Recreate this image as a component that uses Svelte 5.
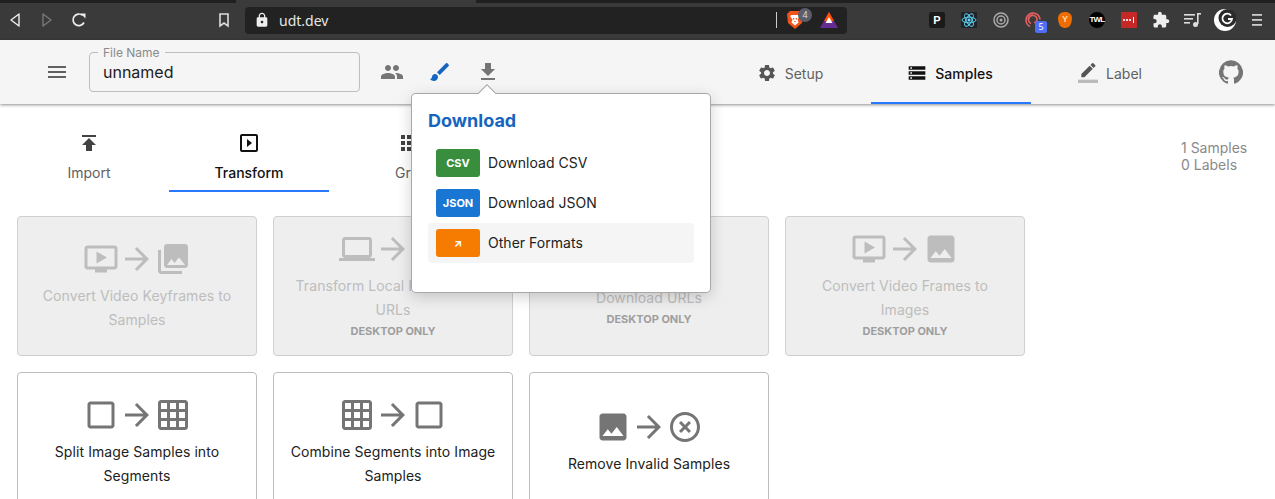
<script>
  const icons = {
    video: "M21 3H3c-1.11 0-2 .89-2 2v12c0 1.1.89 2 2 2h5v2h8v-2h5c1.1 0 1.99-.9 1.99-2L23 5c0-1.11-.9-2-2-2zm0 14H3V5h18v12zm-5-6l-7 4V7z",
    arrow: "M12 4l-1.41 1.41L16.17 11H4v2h12.17l-5.58 5.59L12 20l8-8z",
    collections: "M22 16V4c0-1.1-.9-2-2-2H8c-1.1 0-2 .9-2 2v12c0 1.1.9 2 2 2h12c1.1 0 2-.9 2-2zm-11-4l2.03 2.71L16 11l4 5H8l3-4zM2 6v14c0 1.1.9 2 2 2h14v-2H4V6H2z",
    laptop: "M20 18c1.1 0 2-.9 2-2V6c0-1.1-.9-2-2-2H4c-1.1 0-2 .9-2 2v10c0 1.1.9 2 2 2H0v2h24v-2h-4zM4 6h16v10H4V6z",
    image: "M21 19V5c0-1.1-.9-2-2-2H5c-1.1 0-2 .9-2 2v14c0 1.1.9 2 2 2h14c1.1 0 2-.9 2-2zM8.5 13.5l2.5 3.01L14.5 12l4.5 6H5l3.5-4.5z",
    blank: "M19 5v14H5V5h14m0-2H5c-1.1 0-2 .9-2 2v14c0 1.1.9 2 2 2h14c1.1 0 2-.9 2-2V5c0-1.1-.9-2-2-2z",
    grid: "M20 2H4c-1.1 0-2 .9-2 2v16c0 1.1.9 2 2 2h16c1.1 0 2-.9 2-2V4c0-1.1-.9-2-2-2zM8 20H4v-4h4v4zm0-6H4v-4h4v4zm0-6H4V4h4v4zm6 12h-4v-4h4v4zm0-6h-4v-4h4v4zm0-6h-4V4h4v4zm6 12h-4v-4h4v4zm0-6h-4v-4h4v4zm0-6h-4V4h4v4z",
    off: "M14.59 8L12 10.59 9.41 8 8 9.41 10.59 12 8 14.59 9.41 16 12 13.41 14.59 16 16 14.59 13.41 12 16 9.41 14.59 8zM12 2C6.47 2 2 6.47 2 12s4.47 10 10 10 10-4.47 10-10S17.53 2 12 2zm0 18c-4.41 0-8-3.59-8-8s3.59-8 8-8 8 3.59 8 8-3.59 8-8 8z",
    publish: "M5 4v2h14V4H5zm0 10h4v6h6v-6h4l-7-7-7 7z",
    slideshow: "M10 8v8l5-4-5-4zm9-5H5c-1.1 0-2 .9-2 2v14c0 1.1.9 2 2 2h14c1.1 0 2-.9 2-2V5c0-1.1-.9-2-2-2zm0 16H5V5h14v14z",
    apps: "M4 8h4V4H4v4zm6 12h4v-4h-4v4zm-6 0h4v-4H4v4zm0-6h4v-4H4v4zm6 0h4v-4h-4v4zm6-10v4h4V4h-4zm-6 4h4V4h-4v4zm6 6h4v-4h-4v4zm0 6h4v-4h-4v4z",
    menu: "M3 18h18v-2H3v2zm0-5h18v-2H3v2zm0-7v2h18V6H3z",
    group: "M16 11c1.66 0 2.99-1.34 2.99-3S17.66 5 16 5c-1.66 0-3 1.34-3 3s1.34 3 3 3zm-8 0c1.66 0 2.99-1.34 2.99-3S9.66 5 8 5C6.34 5 5 6.34 5 8s1.34 3 3 3zm0 2c-2.33 0-7 1.17-7 3.5V19h14v-2.5c0-2.33-4.67-3.5-7-3.5zm8 0c-.29 0-.62.02-.97.05 1.16.84 1.97 1.97 1.97 3.45V19h6v-2.5c0-2.33-4.67-3.5-7-3.5z",
    brush: "M7 14c-1.66 0-3 1.34-3 3 0 1.31-1.16 2-2 2 .92 1.22 2.49 2 4 2 2.21 0 4-1.79 4-4 0-1.66-1.34-3-3-3zm13.71-9.37l-1.34-1.34c-.39-.39-1.02-.39-1.41 0L9 12.25 11.75 15l8.96-8.96c.39-.39.39-1.02 0-1.41z",
    download: "M19 9h-4V3H9v6H5l7 7 7-7zM5 18v2h14v-2H5z",
    settings: "M19.14 12.94c.04-.3.06-.61.06-.94 0-.32-.02-.64-.07-.94l2.03-1.58c.18-.14.23-.41.12-.61l-1.92-3.32c-.12-.22-.37-.29-.59-.22l-2.39.96c-.5-.38-1.03-.7-1.62-.94l-.36-2.54c-.04-.24-.24-.41-.48-.41h-3.84c-.24 0-.43.17-.47.41l-.36 2.54c-.59.24-1.13.57-1.62.94l-2.39-.96c-.22-.08-.47 0-.59.22L2.74 8.87c-.12.21-.08.47.12.61l2.03 1.58c-.05.3-.09.63-.09.94s.02.64.07.94l-2.03 1.58c-.18.14-.23.41-.12.61l1.92 3.32c.12.22.37.29.59.22l2.39-.96c.5.38 1.03.7 1.62.94l.36 2.54c.05.24.24.41.48.41h3.84c.24 0 .44-.17.47-.41l.36-2.54c.59-.24 1.13-.56 1.62-.94l2.39.96c.22.08.47 0 .59-.22l1.92-3.32c.12-.22.07-.47-.12-.61l-2.01-1.58zM12 15.6c-1.98 0-3.6-1.62-3.6-3.6s1.62-3.6 3.6-3.6 3.6 1.62 3.6 3.6-1.62 3.6-3.6 3.6z",
    storage: "M2 20h20v-4H2v4zm2-3h2v2H4v-2zM2 4v4h20V4H2zm4 3H4V5h2v2zm-4 7h20v-4H2v4zm2-3h2v2H4v-2z",
    pencil: "M17.75 7L14 3.25l-10 10V17h3.75l10-10zm2.96-2.96c.39-.39.39-1.02 0-1.41L18.37.29c-.39-.39-1.02-.39-1.41 0L15 2.25 18.75 6l1.96-1.96z",
    github: "M12 .3a12 12 0 0 0-3.8 23.4c.6.1.8-.3.8-.6v-2c-3.3.7-4-1.6-4-1.6-.6-1.4-1.4-1.8-1.4-1.8-1-.7.1-.7.1-.7 1.2 0 1.9 1.2 1.9 1.2 1 1.8 2.8 1.3 3.5 1 0-.8.4-1.3.7-1.6-2.7-.3-5.5-1.3-5.5-6 0-1.2.5-2.3 1.3-3.1-.2-.4-.6-1.6 0-3.2 0 0 1-.3 3.4 1.2a11.5 11.5 0 0 1 6 0c2.3-1.5 3.3-1.2 3.3-1.2.6 1.6.2 2.8 0 3.2.9.8 1.3 1.9 1.3 3.2 0 4.6-2.8 5.6-5.5 5.9.5.4.9 1 .9 2.2v3.3c0 .3.1.7.8.6A12 12 0 0 0 12 .3"
  };

  const headerTabs = [
    { label: "Setup", icon: "settings" },
    { label: "Samples", icon: "storage", active: true },
    { label: "Label", icon: "pencil", bar: true }
  ];

  const subTabs = [
    { label: "Import", icon: "publish" },
    { label: "Transform", icon: "slideshow", active: true },
    { label: "Grid", icon: "apps" }
  ];

  const formats = [
    { badge: "CSV", label: "Download CSV", color: "#388e3c" },
    { badge: "JSON", label: "Download JSON", color: "#1976d2" },
    { badge: "↗", label: "Other Formats", color: "#f57c00", hover: true }
  ];

  const cards = [
    { title: "Convert Video Keyframes to Samples", from: "video", to: "collections", disabled: true },
    { title: "Transform Local Files to Web URLs", from: "laptop", to: "image", disabled: true, desktop: true },
    { title: "Download URLs", from: "image", to: "image", disabled: true, desktop: true },
    { title: "Convert Video Frames to Images", from: "video", to: "image", disabled: true, desktop: true },
    { title: "Split Image Samples into Segments", from: "blank", to: "grid" },
    { title: "Combine Segments into Image Samples", from: "grid", to: "blank" },
    { title: "Remove Invalid Samples", from: "image", to: "off" }
  ];
</script>

<div class="browser">
  <div class="tabstrip"><div class="current-tab"></div></div>
  <div class="toolbar">
    <div class="nav">
      <svg class="back" viewBox="0 0 12 16" width="12" height="16"><path d="M10 2L2 8l8 6z" fill="none" stroke="#eee" stroke-width="1.4" stroke-linejoin="round" /></svg>
      <svg class="forward" viewBox="0 0 12 16" width="12" height="16"><path d="M2 2l8 6-8 6z" fill="none" stroke="#777" stroke-width="1.4" stroke-linejoin="round" /></svg>
      <svg class="reload" viewBox="0 0 16 16" width="16" height="16"><path d="M13 10.500A5.800 5.800 0 1 1 11.600 3.400" fill="none" stroke="#eee" stroke-width="1.700" /><path d="M9.500 1.500h5v5z" fill="#eee" /></svg>
      <svg class="bookmark" viewBox="0 0 12 16" width="12" height="16"><path d="M2 2h8v12l-4-3-4 3z" fill="none" stroke="#ddd" stroke-width="1.600" /></svg>
    </div>
    <div class="url">
      <svg viewBox="0 0 24 24" width="16" height="16"><path fill="#eee" d="M18 8h-1V6c0-2.76-2.24-5-5-5S7 3.24 7 6v2H6c-1.1 0-2 .9-2 2v10c0 1.1.9 2 2 2h12c1.1 0 2-.9 2-2V10c0-1.1-.9-2-2-2zm-6 9c-1.1 0-2-.9-2-2s.9-2 2-2 2 .9 2 2-.9 2-2 2zm3.1-9H8.900V6c0-1.71 1.39-3.1 3.1-3.1s3.1 1.39 3.1 3.1v2z" /></svg>
      <span class="host">udt.dev</span>
      <span class="divider"></span>
      <div class="brave">
        <svg viewBox="0 0 16 20" width="16" height="20"><path d="M3 1h10l3 3-1 9-7 6-7-6-1-9z" fill="#f0531c" /><path d="M4 5h8l.8 1.500-2.300 3 1 3L8 15.500 4.500 12.500l1-3-2.300-3z" fill="#fff" /><path d="M6 8h1.300v1.500H6zM8.700 8H10v1.500H8.700zM7 11h2l-1 1.500z" fill="#f0531c" /></svg>
        <span class="shield-count">4</span>
      </div>
      <svg class="bat" viewBox="0 0 18 16" width="18" height="16"><path d="M9 0l9 16H0z" fill="#662d91" /><path d="M9 0l5 9H4z" fill="#ff5000" /><path d="M9 5l3.500 6h-7z" fill="#fff" /></svg>
    </div>
    <div class="extensions">
      <span class="ext"><span class="ext-p">P</span></span>
      <span class="ext">
        <svg viewBox="0 0 16 16" width="16" height="16"><rect width="16" height="16" fill="#20232a" /><g fill="none" stroke="#61dafb" stroke-width=".9"><ellipse cx="8" cy="8" rx="7" ry="2.800" /><ellipse cx="8" cy="8" rx="7" ry="2.800" transform="rotate(60 8 8)" /><ellipse cx="8" cy="8" rx="7" ry="2.800" transform="rotate(120 8 8)" /></g><circle cx="8" cy="8" r="1.500" fill="#61dafb" /></svg>
      </span>
      <span class="ext">
        <svg viewBox="0 0 16 16" width="16" height="16"><g fill="none" stroke="#aaa"><circle cx="8" cy="8" r="7" stroke-width="1.500" /><circle cx="8" cy="8" r="4" stroke-width="1.500" /></g><circle cx="8" cy="8" r="1.500" fill="#aaa" /></svg>
      </span>
      <span class="ext">
        <svg viewBox="0 0 16 16" width="16" height="16"><g fill="none" stroke="#e35f5f" stroke-width="1.600"><path d="M5 14.500A7 7 0 1 1 15 7.500" /><path d="M6 11.500A4.200 4.200 0 1 1 12 7.500 3 3 0 0 1 9 10.500" /><path d="M3 7.500A5 5 0 0 1 8 3" /></g></svg>
        <span class="ext-badge">5</span>
      </span>
      <span class="ext">
        <span class="ext-y">Y</span>
      </span>
      <span class="ext"><span class="ext-twl">TWL</span></span>
      <span class="ext">
        <svg viewBox="0 0 16 16" width="16" height="16"><rect width="16" height="16" rx="1" fill="#c62828" /><g fill="#fff"><circle cx="3" cy="8" r="1.100" /><circle cx="6" cy="8" r="1.100" /><circle cx="9" cy="8" r="1.100" /><rect x="12" y="5" width="1" height="6" /></g></svg>
      </span>
      <span class="ext">
        <svg viewBox="0 0 24 24" width="18" height="18"><path fill="#eee" d="M20.500 11H19V7c0-1.100-.9-2-2-2h-4V3.500C13 2.120 11.880 1 10.500 1S8 2.120 8 3.500V5H4c-1.100 0-1.990.9-1.990 2v3.800H3.500c1.490 0 2.700 1.210 2.700 2.700s-1.210 2.700-2.700 2.700H2V20c0 1.100.9 2 2 2h3.800v-1.500c0-1.490 1.210-2.700 2.700-2.700 1.490 0 2.700 1.210 2.700 2.700V22H17c1.100 0 2-.9 2-2v-4h1.500c1.380 0 2.500-1.120 2.500-2.500S21.880 11 20.500 11z" /></svg>
      </span>
      <span class="ext">
        <svg viewBox="0 0 18 16" width="18" height="16"><g fill="#ddd"><rect y="2" width="11" height="1.600" /><rect y="6" width="9" height="1.600" /><rect y="10" width="6" height="1.600" /><rect x="13" y="1" width="1.600" height="11" /><rect x="13" y="1" width="4" height="1.600" /><circle cx="11.500" cy="12.500" r="2.500" /></g></svg>
      </span>
      <span class="ext">
        <svg viewBox="0 0 22 22" width="22" height="22"><circle cx="11" cy="11" r="11" fill="#fff" /><circle cx="13.500" cy="9" r="9" fill="#2b2b2b" /><path d="M17 6.500A4.800 4.800 0 1 0 18 10h-4" fill="none" stroke="#fff" stroke-width="1.800" /></svg>
      </span>
      <span class="ext">
        <svg viewBox="0 0 10 12" width="10" height="12"><g fill="#ccc"><rect width="10" height="1.800" /><rect y="5" width="10" height="1.800" /><rect y="10" width="10" height="1.800" /></g></svg>
      </span>
    </div>
  </div>
</div>

<header class="header">
  <svg class="hamburger" viewBox="0 0 24 24" width="24" height="24"><path d={icons.menu} /></svg>
  <div class="field">
    <span class="legend">File Name</span>
    <span class="value">unnamed</span>
  </div>
  <div class="actions">
    <svg viewBox="0 0 24 24" width="24" height="24"><path d={icons.group} /></svg>
    <svg viewBox="0 0 24 24" width="24" height="24" fill="#1565c0"><path d={icons.brush} /></svg>
    <svg viewBox="0 0 24 24" width="24" height="24"><path d={icons.download} /></svg>
  </div>
  <nav class="header-tabs">
    {#each headerTabs as tab}
      <div class="header-tab" class:active={tab.active}>
        <svg viewBox="0 0 24 24" width="20" height="20">
          <path d={icons[tab.icon]} />
          {#if tab.bar}<rect y="20" width="24" height="4" fill="#bbb" />{/if}
        </svg>
        <span>{tab.label}</span>
      </div>
    {/each}
  </nav>
  <svg class="github" viewBox="0 0 24 24" width="24" height="24"><path d={icons.github} /></svg>
</header>

<main class="main">
  <div class="top">
    <div class="sub-tabs">
      {#each subTabs as tab}
        <div class="sub-tab" class:active={tab.active}>
          <svg viewBox="0 0 24 24" width="24" height="24"><path d={icons[tab.icon]} /></svg>
          <span>{tab.label}</span>
        </div>
      {/each}
    </div>
    <div class="counts">
      <div>1 Samples</div>
      <div>0 Labels</div>
    </div>
  </div>

  <div class="cards">
    {#each cards as card}
      <div class="card" class:disabled={card.disabled}>
        <div class="card-icons">
          <svg viewBox="0 0 24 24" width="36" height="36"><path d={icons[card.from]} /></svg>
          <svg viewBox="0 0 24 24" width="36" height="36"><path d={icons.arrow} /></svg>
          <svg viewBox="0 0 24 24" width="36" height="36"><path d={icons[card.to]} /></svg>
        </div>
        <div class="card-title">{card.title}</div>
        {#if card.desktop}<div class="card-note">DESKTOP ONLY</div>{/if}
      </div>
    {/each}
  </div>
</main>

<div class="popover">
  <div class="popover-title">Download</div>
  {#each formats as format}
    <div class="format" class:hover={format.hover}>
      <span class="format-badge" style="background: {format.color}">{format.badge}</span>
      <span class="format-label">{format.label}</span>
    </div>
  {/each}
</div>

<style>
  :global(html), :global(body) {
    margin: 0;
    height: 499px;
    overflow: hidden;
    background: #fff;
  }

  .browser {
    background: #3a3a3a;
    height: 40px;
    font-family: "Noto Sans", sans-serif;
  }

  .tabstrip {
    height: 3px;
    background: #202020;
  }

  .current-tab {
    width: 240px;
    height: 3px;
    margin-left: 236px;
    background: #3a3a3a;
  }

  .toolbar {
    display: flex;
    align-items: center;
    height: 37px;
  }

  .nav {
    display: flex;
    align-items: center;
    width: 245px;
    flex: none;
    padding-bottom: 3px;
    box-sizing: border-box;
  }

  .back { margin-left: 9px; }
  .forward { margin-left: 20px; }
  .reload { margin-left: 18px; }
  .bookmark { margin-left: 131px; }

  .url {
    display: flex;
    align-items: center;
    width: 602px;
    height: 27px;
    flex: none;
    margin-bottom: 3px;
    padding-left: 9px;
    box-sizing: border-box;
    background: #222;
    border-radius: 4px;
    color: #e6e6e6;
    font-size: 14px;
  }

  .host { margin-left: 9px; }

  .divider {
    width: 1px;
    height: 16px;
    margin-left: auto;
    background: #ccc;
  }

  .brave {
    position: relative;
    display: flex;
    margin-left: 10px;
  }

  .shield-count {
    position: absolute;
    left: 11px;
    top: -2px;
    width: 14px;
    height: 14px;
    border-radius: 50%;
    background: #5b5d6b;
    color: #ddd;
    font-size: 9px;
    line-height: 14px;
    text-align: center;
  }

  .bat { margin: 0 9px 0 17px; }

  .extensions {
    display: flex;
    margin-left: 74px;
    margin-bottom: 3px;
  }

  .ext {
    position: relative;
    display: flex;
    align-items: center;
    justify-content: center;
    width: 32px;
    height: 24px;
  }

  .ext-p {
    width: 16px;
    height: 16px;
    border-radius: 2px;
    background: #1a1a1a;
    color: #fff;
    font: bold 11px/16px "Liberation Sans", sans-serif;
    text-align: center;
  }

  .ext-badge {
    position: absolute;
    left: 18px;
    top: 13px;
    width: 12px;
    height: 12px;
    border-radius: 2px;
    background: #4f6ef7;
    color: #fff;
    font-size: 9px;
    line-height: 12px;
    text-align: center;
  }

  .ext-y {
    width: 14px;
    height: 16px;
    border-radius: 50% 50% 50% 50% / 45% 45% 70% 70%;
    background: #ef6c00;
    color: #ffd9a8;
    font: bold 9px/15px "Liberation Sans", sans-serif;
    text-align: center;
  }

  .ext-twl {
    width: 16px;
    height: 16px;
    border-radius: 50%;
    background: #000;
    color: #fff;
    font: bold 8px/16px "Liberation Sans", sans-serif;
    letter-spacing: -0.8px;
    text-align: center;
  }

  .header {
    position: relative;
    z-index: 1;
    display: flex;
    align-items: center;
    height: 64px;
    padding-left: 45px;
    background: #f5f5f5;
    box-shadow: 0 1px 3px rgba(0, 0, 0, 0.45);
    font-family: Inter, sans-serif;
  }

  .hamburger {
    flex: none;
    fill: #616161;
    margin-right: 20px;
  }

  .field {
    position: relative;
    width: 271px;
    height: 40px;
    box-sizing: border-box;
    padding: 0 13px;
    display: flex;
    align-items: center;
    border: 1px solid #bdbdbd;
    border-radius: 4px;
  }

  .legend {
    position: absolute;
    left: 8px;
    top: -7px;
    padding: 0 5px;
    background: #f5f5f5;
    color: #8a8a8a;
    font-size: 12px;
    line-height: 14px;
  }

  .value {
    color: #212121;
    font-size: 16px;
  }

  .actions {
    display: flex;
    gap: 24px;
    margin-left: 20px;
    fill: #757575;
  }

  .header-tabs {
    display: flex;
    align-self: stretch;
    margin-left: 211px;
  }

  .header-tab {
    display: flex;
    align-items: center;
    justify-content: center;
    gap: 8px;
    width: 160px;
    box-sizing: border-box;
    padding: 4px 2px 0 0;
    border-bottom: 2px solid transparent;
    color: #616161;
    fill: #555;
    font-size: 14px;
  }

  .header-tab.active {
    border-bottom-color: #2979ff;
    color: #111;
    fill: #111;
    font-weight: 500;
  }

  .github {
    flex: none;
    margin-left: 28px;
    fill: #757575;
  }

  .main {
    font-family: Inter, sans-serif;
  }

  .top {
    display: flex;
    justify-content: space-between;
    padding: 24px 27px 0 9px;
  }

  .sub-tabs {
    display: flex;
  }

  .sub-tab {
    display: flex;
    flex-direction: column;
    align-items: center;
    gap: 9px;
    width: 160px;
    height: 64px;
    box-sizing: border-box;
    padding-top: 3px;
    border-bottom: 2px solid transparent;
    color: #616161;
    fill: #424242;
    font-size: 14px;
    line-height: 17px;
  }

  .sub-tab.active {
    border-bottom-color: #2979ff;
    color: #111;
    fill: #111;
    font-weight: 500;
  }

  .counts {
    padding-top: 11px;
    width: 67px;
    color: #8a8a8a;
    font-size: 14px;
    line-height: 17px;
  }

  .cards {
    display: grid;
    grid-template-columns: repeat(4, 240px);
    grid-auto-rows: 140px;
    gap: 16px;
    padding: 24px 17px 0;
  }

  .card {
    display: flex;
    flex-direction: column;
    align-items: center;
    justify-content: center;
    box-sizing: border-box;
    padding: 0 16px;
    border: 1px solid #bdbdbd;
    border-radius: 4px;
    color: #212121;
    fill: #757575;
    font-size: 14px;
    line-height: 24px;
    letter-spacing: 0.08px;
    text-align: center;
  }

  .card.disabled {
    background: #eee;
    border-color: #d0d0d0;
    color: #bdbdbd;
    fill: #bdbdbd;
  }

  .card-icons {
    display: flex;
    height: 44px;
    box-sizing: border-box;
    padding-top: 1px;
    flex: none;
  }

  .card-note {
    padding-bottom: 2px;
    color: #9e9e9e;
    font-size: 11px;
    font-weight: 700;
    line-height: 18px;
    letter-spacing: 0;
  }

  .popover {
    position: absolute;
    z-index: 2;
    left: 412px;
    top: 94px;
    width: 298px;
    height: 198px;
    box-sizing: border-box;
    padding: 16px;
    background: #fff;
    border-radius: 4px;
    box-shadow: 0 0 0 1px #a8a8a8, 0 4px 16px rgba(0, 0, 0, 0.2);
    font-family: Inter, sans-serif;
  }

  .popover::before {
    content: "";
    position: absolute;
    left: 69px;
    top: -6px;
    width: 12px;
    height: 12px;
    background: #fff;
    transform: rotate(45deg);
    box-shadow: -1px -1px 0 #a8a8a8;
  }

  .popover-title {
    margin-bottom: 8px;
    color: #1565c0;
    font-size: 18px;
    font-weight: 700;
    line-height: 25px;
    position: relative;
    top: -2px;
  }

  .format {
    display: flex;
    align-items: center;
    gap: 8px;
    height: 40px;
    padding-left: 8px;
    border-radius: 4px;
    color: #212121;
    font-size: 14px;
  }

  .format-label {
    padding-bottom: 2px;
    letter-spacing: 0.03px;
  }

  .format.hover {
    background: #f5f5f5;
  }

  .format-badge {
    display: flex;
    align-items: center;
    justify-content: center;
    width: 44px;
    height: 28px;
    border-radius: 3px;
    color: #fff;
    font-size: 11px;
    font-weight: 700;
  }
</style>
